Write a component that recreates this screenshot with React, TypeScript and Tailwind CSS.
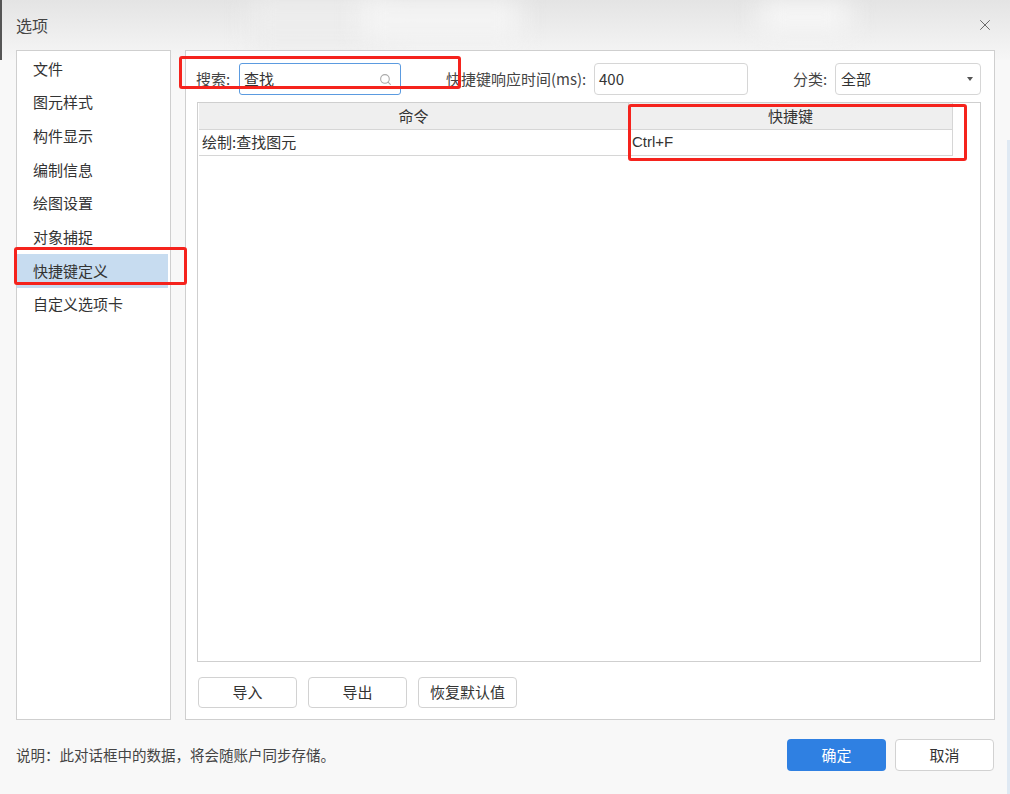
import { X, Search } from 'lucide-react';

const navItems = ['文件', '图元样式', '构件显示', '编制信息', '绘图设置', '对象捕捉', '快捷键定义', '自定义选项卡'];

const font = { fontFamily: '"Noto Sans CJK SC", "Noto Sans", sans-serif' };

function ActionButton({ label }: { label: string }) {
  return (
    <button className="flex h-[31px] w-[99px] items-center justify-center rounded-[4px] border border-[#d2d2d2] bg-white text-[15px] text-[#333]">
      {label}
    </button>
  );
}

export default function App() {
  return (
    <div
      className="relative h-[794px] w-[1010px] overflow-hidden bg-[#f8f8f8] text-[#333]"
      style={font}
    >
      {/* blurred window title bar */}
      <div className="absolute inset-x-0 top-0 h-[60px] bg-gradient-to-b from-[#e4e4e4] to-[#f6f6f6]" />
      <div className="absolute left-[250px] top-0 h-[50px] w-[140px] bg-[#ededed] blur-md" />
      <div className="absolute left-[360px] top-0 h-[40px] w-[160px] bg-[#f4f4f4] blur-md" />
      <div className="absolute left-[760px] top-[2px] h-[30px] w-[90px] bg-[#f7f7f7] blur-md" />
      <div className="absolute left-0 top-0 h-[60px] w-[2px] bg-[#555]" />
      <div className="absolute right-0 top-[140px] h-[654px] w-[3px] bg-[#dfe9f3]" />

      <div className="relative flex h-full flex-col">
        {/* title */}
        <div className="flex h-[50px] items-center justify-between pl-[16px] pr-[16px]">
          <span className="text-[16px] text-[#444]">选项</span>
          <X className="h-[18px] w-[18px] text-[#666]" strokeWidth={1.3} />
        </div>

        {/* panels */}
        <div className="flex h-[670px] gap-[14px] pl-[16px] pr-[15px]">
          <div className="flex w-[155px] flex-col border border-[#cfcfcf] bg-white pt-[1px]">
            {navItems.map((item) => (
              <div
                key={item}
                className={
                  'flex h-[33.7px] items-center pl-[16px] text-[15px] ' +
                  (item === '快捷键定义' ? 'mr-[2px] bg-[#c7dcf0]' : '')
                }
              >
                {item}
              </div>
            ))}
          </div>

          <div className="flex flex-1 flex-col border border-[#cfcfcf] bg-white pb-[11px] pl-[11px] pr-[13px] pt-[12px]">
            <div className="-ml-[1px] flex h-[32px] items-center text-[15px]">
              <span className="w-[43px] text-[#444]">搜索:</span>
              <div className="flex h-[32px] w-[162px] items-center justify-between rounded-[3px] border border-[#5b9be0] pl-[4px] pr-[8px]">
                <span>查找</span>
                <Search className="h-[13px] w-[13px] text-[#aaa]" strokeWidth={2} />
              </div>
              <span className="ml-[45px] w-[148px] whitespace-nowrap text-[#444]">快捷键响应时间(ms):</span>
              <div className="flex h-[32px] w-[154px] items-center rounded-[4px] border border-[#d6d6d6] pl-[4px]">
                400
              </div>
              <span className="ml-[45px] w-[42px] text-[#444]">分类:</span>
              <div className="flex h-[32px] w-[146px] items-center justify-between rounded-[4px] border border-[#d6d6d6] pl-[5px] pr-[7px]">
                <span>全部</span>
                <span className="h-0 w-0 border-x-[3px] border-t-[4px] border-x-transparent border-t-[#555]" />
              </div>
            </div>

            <div className="mt-[7px] flex flex-1 flex-col border border-[#cfcfcf] pl-[1px] pr-[27px]">
              <div className="flex h-[27px] border-b border-[#d6d6d6] bg-[#efefef] text-[15px]">
                <div className="flex w-[430px] items-center justify-center border-r border-[#d6d6d6]">命令</div>
                <div className="flex flex-1 items-center justify-center border-r border-[#d6d6d6]">快捷键</div>
              </div>
              <div className="flex h-[26px] border-b border-[#d6d6d6] text-[15px]">
                <div className="flex w-[430px] items-center border-r border-[#d6d6d6] pl-[3px]">绘制:查找图元</div>
                <div
                  className="flex flex-1 items-center border-r border-[#d6d6d6] pl-[3px]"
                  style={{ fontFamily: '"Liberation Sans", "Noto Sans CJK SC", sans-serif' }}
                >
                  Ctrl+F
                </div>
              </div>
            </div>

            <div className="mt-[15px] flex gap-[11px] pl-[1px]">
              <ActionButton label="导入" />
              <ActionButton label="导出" />
              <ActionButton label="恢复默认值" />
            </div>
          </div>
        </div>

        {/* footer */}
        <div className="flex flex-1 items-center justify-between pb-[4px] pl-[16px] pr-[16px]">
          <span className="text-[14.5px] text-[#444]">说明：此对话框中的数据，将会随账户同步存储。</span>
          <div className="flex gap-[9px]">
            <button className="flex h-[32px] w-[99px] items-center justify-center rounded-[4px] bg-[#2f80e2] text-[15px] text-white">
              确定
            </button>
            <button className="flex h-[32px] w-[99px] items-center justify-center rounded-[4px] border border-[#d2d2d2] bg-white text-[15px] text-[#333]">
              取消
            </button>
          </div>
        </div>
      </div>

      {/* red annotation boxes */}
      <div className="absolute left-[179px] top-[56px] h-[33px] w-[282px] rounded-[3px] border-[3px] border-[#f5231d]" />
      <div className="absolute left-[14px] top-[247px] h-[38px] w-[173px] rounded-[3px] border-[3px] border-[#f5231d]" />
      <div className="absolute left-[628px] top-[104px] h-[57px] w-[339px] rounded-[3px] border-[3px] border-[#f5231d]" />
    </div>
  );
}
